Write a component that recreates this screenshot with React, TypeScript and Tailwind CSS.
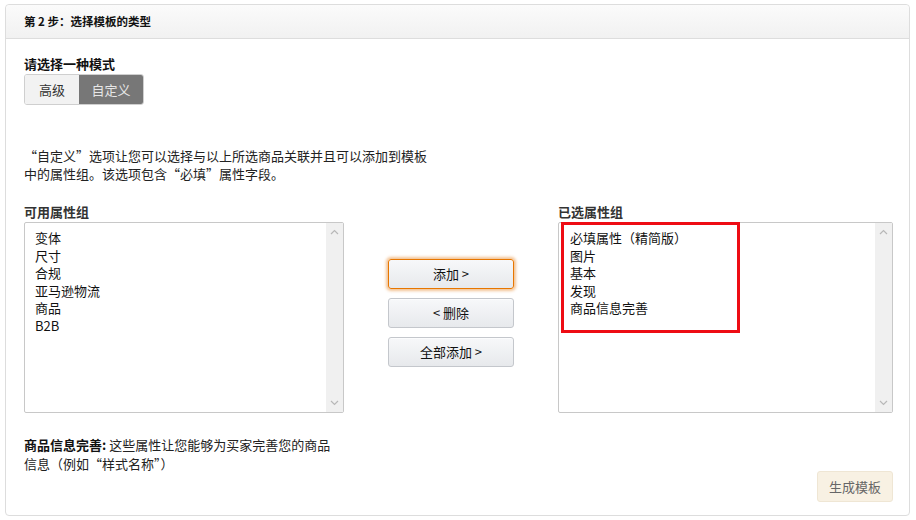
import React from 'react'

const available = ['变体', '尺寸', '合规', '亚马逊物流', '商品', 'B2B']
const selected = ['必填属性（精简版）', '图片', '基本', '发现', '商品信息完善']

function ScrollTrack() {
  return (
    <div className="w-[17px] bg-[#f0f0f0] flex flex-col justify-between items-center py-[6px]">
      <svg width="9" height="6" viewBox="0 0 9 6" fill="none">
        <path d="M1 5 L4.5 1.5 L8 5" stroke="#b8b8b8" strokeWidth="1.2" />
      </svg>
      <svg width="9" height="6" viewBox="0 0 9 6" fill="none">
        <path d="M1 1 L4.5 4.5 L8 1" stroke="#b8b8b8" strokeWidth="1.2" />
      </svg>
    </div>
  )
}

function ActionButton({ label, focused = false }: { label: string; focused?: boolean }) {
  return (
    <button
      className={`h-[30px] w-full rounded-[3px] border bg-gradient-to-b from-[#f7f8fa] to-[#e7e9ec] text-[13px] text-[#111] ${
        focused
          ? 'border-[#e77600] shadow-[0_0_3px_2px_rgba(228,121,17,0.45)]'
          : 'border-[#c4c7cc] shadow-[0_1px_0_rgba(255,255,255,0.6)_inset]'
      }`}
    >
      {label}
    </button>
  )
}

export default function App() {
  return (
    <div
      className="w-[916px] h-[520px] bg-white pt-[4px] pb-[4px] pl-[5px] pr-[6px]"
      style={{ fontFamily: '"Noto Sans CJK SC", "Noto Sans", Arial, sans-serif' }}
    >
      <div className="h-full border border-[#dddddd] rounded-[4px] flex flex-col">
        {/* Header */}
        <div className="h-[34px] shrink-0 bg-gradient-to-b from-[#fbfbfb] to-[#f1f1f1] border-b border-[#dddddd] rounded-t-[4px] px-[18px] flex items-center">
          <span className="text-[11.5px] font-bold text-[#111]">第 2 步：选择模板的类型</span>
        </div>

        <div className="flex-1 flex flex-col pl-[18px] pr-[16px]">
          {/* Mode */}
          <div className="mt-[16px] text-[13px] leading-[18px] font-bold text-[#111]">请选择一种模式</div>
          <div className="flex mt-[1px] h-[31px] w-[120px] rounded-[3px] border border-[#cfcfcf] overflow-hidden text-[13px]">
            <div className="w-[54px] bg-[#f2f2f2] text-[#333] flex items-center justify-center">高级</div>
            <div className="flex-1 bg-[#777777] text-[#e6e6e6] flex items-center justify-center">自定义</div>
          </div>

          <p className="mt-[42px] w-[440px] text-[13px] leading-[18px] text-[#222]">
            “自定义”选项让您可以选择与以上所选商品关联并且可以添加到模板
            <br />
            中的属性组。该选项包含“必填”属性字段。
          </p>

          {/* Lists */}
          <div className="flex mt-[20px]">
            <div className="w-[320px]">
              <div className="text-[13px] leading-[18px] font-bold text-[#333]">可用属性组</div>
              <div className="mt-[1px] h-[191px] border border-[#c8c8c8] rounded-[2px] flex bg-white">
                <div className="flex-1 pt-[6px] pl-[10px] text-[13px] leading-[17.6px] text-[#111]">
                  {available.map(item => (
                    <div key={item}>{item}</div>
                  ))}
                </div>
                <ScrollTrack />
              </div>
            </div>

            <div className="w-[126px] ml-[44px] pt-[56px] flex flex-col gap-[9px]">
              <ActionButton label="添加 >" focused />
              <ActionButton label="< 删除" />
              <ActionButton label="全部添加 >" />
            </div>

            <div className="w-[335px] ml-[44px]">
              <div className="text-[13px] leading-[18px] font-bold text-[#333]">已选属性组</div>
              <div className="mt-[1px] h-[191px] border border-[#c8c8c8] rounded-[2px] flex bg-white">
                <div className="flex-1">
                  <div className="ml-[2px] mt-[-1px] w-[179px] h-[111px] border-[3px] border-[#ee0c14] pt-[4px] pl-[6px] text-[13px] leading-[17.6px] text-[#111]">
                    {selected.map(item => (
                      <div key={item}>{item}</div>
                    ))}
                  </div>
                </div>
                <ScrollTrack />
              </div>
            </div>
          </div>

          {/* Footer note */}
          <div className="flex mt-[22px]">
            <p className="w-[340px] text-[13px] leading-[19px] text-[#222]">
              <span className="font-bold text-[#111]">商品信息完善:</span> 这些属性让您能够为买家完善您的商品
              <br />
              信息（例如“样式名称”）
            </p>
          </div>
          <div className="flex justify-end mt-[-2px]">
            <button className="h-[31px] w-[76px] rounded-[3px] border border-[#efe6d4] bg-[#f8f1e3] text-[13px] text-[#666]">
              生成模板
            </button>
          </div>
        </div>
      </div>
    </div>
  )
}
